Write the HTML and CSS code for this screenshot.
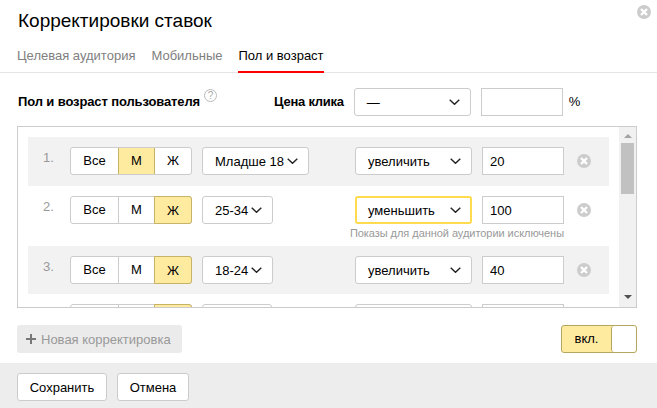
FILE: index.html
```html
<!DOCTYPE html>
<html lang="en">
<head>
  <meta charset="UTF-8">
  <title>Корректировки ставок</title>
  <link rel="stylesheet" href="styles.css">
</head>
<body>
  <svg class="sprites" width="0" height="0">
    <symbol id="chevron" viewBox="0 0 11 6"><path d="M.7.7l4.8 4.6L10.3.7" fill="none" stroke="#222" stroke-width="1.4"/></symbol>
    <symbol id="remove" viewBox="0 0 14 14"><circle cx="7" cy="7" r="7" fill="#ccc"/><path d="M4 4l6 6M10 4l-6 6" stroke="#fff" stroke-width="2.4"/></symbol>
  </svg>

  <div class="popup">
    <header class="head">
      <h2 class="title">Корректировки ставок</h2>
      <svg class="close"><use href="#remove"/></svg>
    </header>

    <nav class="tabs">
      <a class="tab">Целевая аудитория</a>
      <a class="tab">Мобильные</a>
      <a class="tab active">Пол и возраст</a>
    </nav>

    <div class="filter">
      <b class="filter-name">Пол и возраст пользователя</b>
      <span class="help">?</span>
      <b class="price-label">Цена клика</b>
      <div class="select wide">—<svg class="chev"><use href="#chevron"/></svg></div>
      <input class="num" type="text">
      <span class="percent">%</span>
    </div>

    <div class="box">
      <div class="rows">
        <div class="row grey">
          <div class="line">
            <span class="idx">1.</span>
            <div class="seg"><span class="s all">Все</span><span class="s m on">М</span><span class="s f">Ж</span></div>
            <div class="select age">Младше 18<svg class="chev"><use href="#chevron"/></svg></div>
            <div class="select action">увеличить<svg class="chev"><use href="#chevron"/></svg></div>
            <input class="num" type="text" value="20">
            <svg class="del"><use href="#remove"/></svg>
          </div>
        </div>
        <div class="row">
          <div class="line">
            <span class="idx">2.</span>
            <div class="seg"><span class="s all">Все</span><span class="s m">М</span><span class="s f on">Ж</span></div>
            <div class="select age">25-34<svg class="chev"><use href="#chevron"/></svg></div>
            <div class="select action warn">уменьшить<svg class="chev"><use href="#chevron"/></svg></div>
            <input class="num" type="text" value="100">
            <svg class="del"><use href="#remove"/></svg>
          </div>
          <div class="note">Показы для данной аудитории исключены</div>
        </div>
        <div class="row grey last">
          <div class="line">
            <span class="idx">3.</span>
            <div class="seg"><span class="s all">Все</span><span class="s m">М</span><span class="s f on">Ж</span></div>
            <div class="select age">18-24<svg class="chev"><use href="#chevron"/></svg></div>
            <div class="select action">увеличить<svg class="chev"><use href="#chevron"/></svg></div>
            <input class="num" type="text" value="40">
            <svg class="del"><use href="#remove"/></svg>
          </div>
        </div>
        <div class="row">
          <div class="line">
            <div class="idx"></div>
            <div class="seg"><span class="s all"></span><span class="s m"></span><span class="s f on"></span></div>
            <div class="select age peek"></div>
            <div class="select action"></div>
            <input class="num" type="text">
            <svg class="del"><use href="#remove"/></svg>
          </div>
        </div>
      </div>
      <div class="scrollbar">
        <i class="arrow up"></i>
        <div class="thumb"></div>
        <i class="arrow down"></i>
      </div>
    </div>

    <div class="actions">
      <div class="add">
        <svg class="plus" viewBox="0 0 10 10"><path d="M5 0v10M0 5h10" stroke="#777" stroke-width="2"/></svg>
        Новая корректировка
      </div>
      <div class="toggle"><span class="toggle-on">вкл.</span><span class="toggle-off"></span></div>
    </div>

    <footer class="foot">
      <button class="btn save">Сохранить</button>
      <button class="btn cancel">Отмена</button>
    </footer>
  </div>
</body>
</html>
```

FILE: styles.css
```css
body {
  margin: 0;
  font-family: "Liberation Sans", Arial, sans-serif;
  font-size: 13px;
  color: #000;
  background: #fff;
}
.sprites {
  display: block;
}
.popup {
  width: 657px;
  height: 408px;
  overflow: hidden;
}
.head {
  display: flex;
  justify-content: space-between;
  height: 44px;
  padding: 5px 6px 0 18px;
  box-sizing: border-box;
}
.title {
  margin: 0;
  font-size: 19px;
  font-weight: normal;
  line-height: 32px;
}
.close {
  width: 14px;
  height: 14px;
}
.tabs {
  display: flex;
  gap: 16px;
  height: 28px;
  padding-left: 17px;
  border-bottom: 1px solid #e5e5e5;
}
.tab {
  height: 29px;
  box-sizing: border-box;
  line-height: 24px;
  color: #808080;
}
.tab.active {
  color: #000;
  border-bottom: 2px solid #f00;
}
.filter {
  display: flex;
  align-items: flex-start;
  height: 53px;
  padding: 15px 0 0 18px;
  box-sizing: border-box;
}
.filter b {
  letter-spacing: -0.12px;
  white-space: nowrap;
}
.filter-name {
  line-height: 27px;
}
.help {
  width: 11px;
  height: 11px;
  margin: 1px 0 0 4px;
  border: 1px solid #bbb;
  border-radius: 50%;
  font-size: 10px;
  line-height: 11px;
  text-align: center;
  color: #aaa;
}
.filter b.price-label {
  margin: 0 10px 0 57px;
  line-height: 27px;
  letter-spacing: -0.25px;
}
.percent {
  margin-left: 6px;
  line-height: 27px;
}
.select {
  display: flex;
  align-items: center;
  gap: 3px;
  height: 28px;
  padding: 0 10px 0 12px;
  box-sizing: border-box;
  background: #fff;
  border: 1px solid #ccc;
  border-radius: 3px;
  white-space: nowrap;
}
.select.wide,
.select.action {
  justify-content: space-between;
  width: 117px;
  flex: none;
}
.select.wide {
  margin-right: 10px;
}
.select.warn {
  border: 2px solid #ffdb4d;
  padding: 0 9px 0 11px;
}
.select.peek {
  width: 70px;
}
.chev {
  width: 11px;
  height: 6px;
  flex: none;
}
.num {
  width: 82px;
  height: 28px;
  padding: 0 0 0 7px;
  box-sizing: border-box;
  border: 1px solid #ccc;
  border-radius: 0;
  outline: none;
  font: inherit;
  color: #000;
  background: #fff;
  flex: none;
}
.box {
  display: flex;
  width: 620px;
  height: 182px;
  margin-left: 17px;
  box-sizing: border-box;
  border: 1px solid #ccc;
}
.rows {
  flex: 1;
  overflow: hidden;
  margin: 10px 10px 0;
}
.row {
  height: 60px;
  padding-top: 10px;
  box-sizing: border-box;
}
.row.grey {
  height: 49px;
  background: #f2f2f2;
}
.row.last {
  height: 48px;
}
.line {
  display: flex;
  align-items: center;
  height: 28px;
}
.idx {
  width: 42px;
  padding: 0 0 7px 15px;
  box-sizing: border-box;
  color: #999;
  flex: none;
}
.seg {
  display: flex;
  height: 28px;
  margin-right: 10px;
  box-sizing: border-box;
  background: #fff;
  border: 1px solid #ccc;
  border-radius: 3px;
  flex: none;
}
.s {
  line-height: 26px;
  text-align: center;
  box-sizing: border-box;
}
.s.all {
  width: 47px;
}
.s.m {
  width: 36px;
  border-left: 1px solid #ccc;
}
.s.f {
  width: 37px;
  border-left: 1px solid #ccc;
}
.s.on {
  background: #ffeba0;
  border-left: 1px solid #c8b266;
}
.s.m.on {
  width: 37px;
  border-right: 1px solid #c8b266;
}
.s.m.on + .s.f {
  width: 36px;
  border-left: 0;
}
.s.f.on {
  margin: -1px -1px -1px 0;
  width: 38px;
  line-height: 28px;
  border: 1px solid #c8b266;
  border-radius: 0 3px 3px 0;
}
.line .select.action {
  margin-left: auto;
  margin-right: 10px;
}
.del {
  width: 14px;
  height: 14px;
  margin: 0 18px 0 13px;
  flex: none;
}
.note {
  margin: 3px 45px 0 0;
  font-size: 11px;
  line-height: 13px;
  letter-spacing: -0.05px;
  text-align: right;
  color: #999;
}
.scrollbar {
  display: flex;
  flex-direction: column;
  align-items: center;
  width: 17px;
  background: #f1f1f1;
}
.thumb {
  width: 13px;
  height: 51px;
  margin: 5px 0 auto;
  background: #c1c1c1;
}
.arrow {
  width: 0;
  height: 0;
  margin: 7px 0 0;
  border: 4px solid transparent;
  border-top: 0;
  border-bottom: 4px solid #a3a3a3;
}
.arrow.down {
  margin: 0 0 8px;
  border-bottom: 0;
  border-top: 4px solid #505050;
}
.actions {
  display: flex;
  justify-content: space-between;
  width: 620px;
  height: 55px;
  margin-left: 17px;
  padding-top: 17px;
  box-sizing: border-box;
}
.add {
  display: flex;
  align-items: center;
  width: 165px;
  height: 28px;
  padding-left: 9px;
  box-sizing: border-box;
  background: #ebebeb;
  border-radius: 3px;
  color: #999;
}
.plus {
  width: 10px;
  height: 10px;
  margin-right: 5px;
}
.toggle {
  display: flex;
  width: 76px;
  height: 28px;
  box-sizing: border-box;
  border: 1px solid #b5a65f;
  border-radius: 3px;
  background: #ffeba0;
}
.toggle-on {
  width: 49px;
  line-height: 26px;
  text-align: center;
}
.toggle-off {
  flex: 1;
  background: #fff;
  border-left: 1px solid #b5a65f;
  border-radius: 3px;
}
.foot {
  display: flex;
  gap: 10px;
  height: 45px;
  padding: 10px 0 0 17px;
  box-sizing: border-box;
  background: #ededed;
}
.btn {
  height: 28px;
  padding: 0;
  background: #fff;
  border: 1px solid #ccc;
  border-radius: 3px;
  font: inherit;
  color: #000;
}
.btn.save {
  width: 90px;
}
.btn.cancel {
  width: 72px;
}
```
